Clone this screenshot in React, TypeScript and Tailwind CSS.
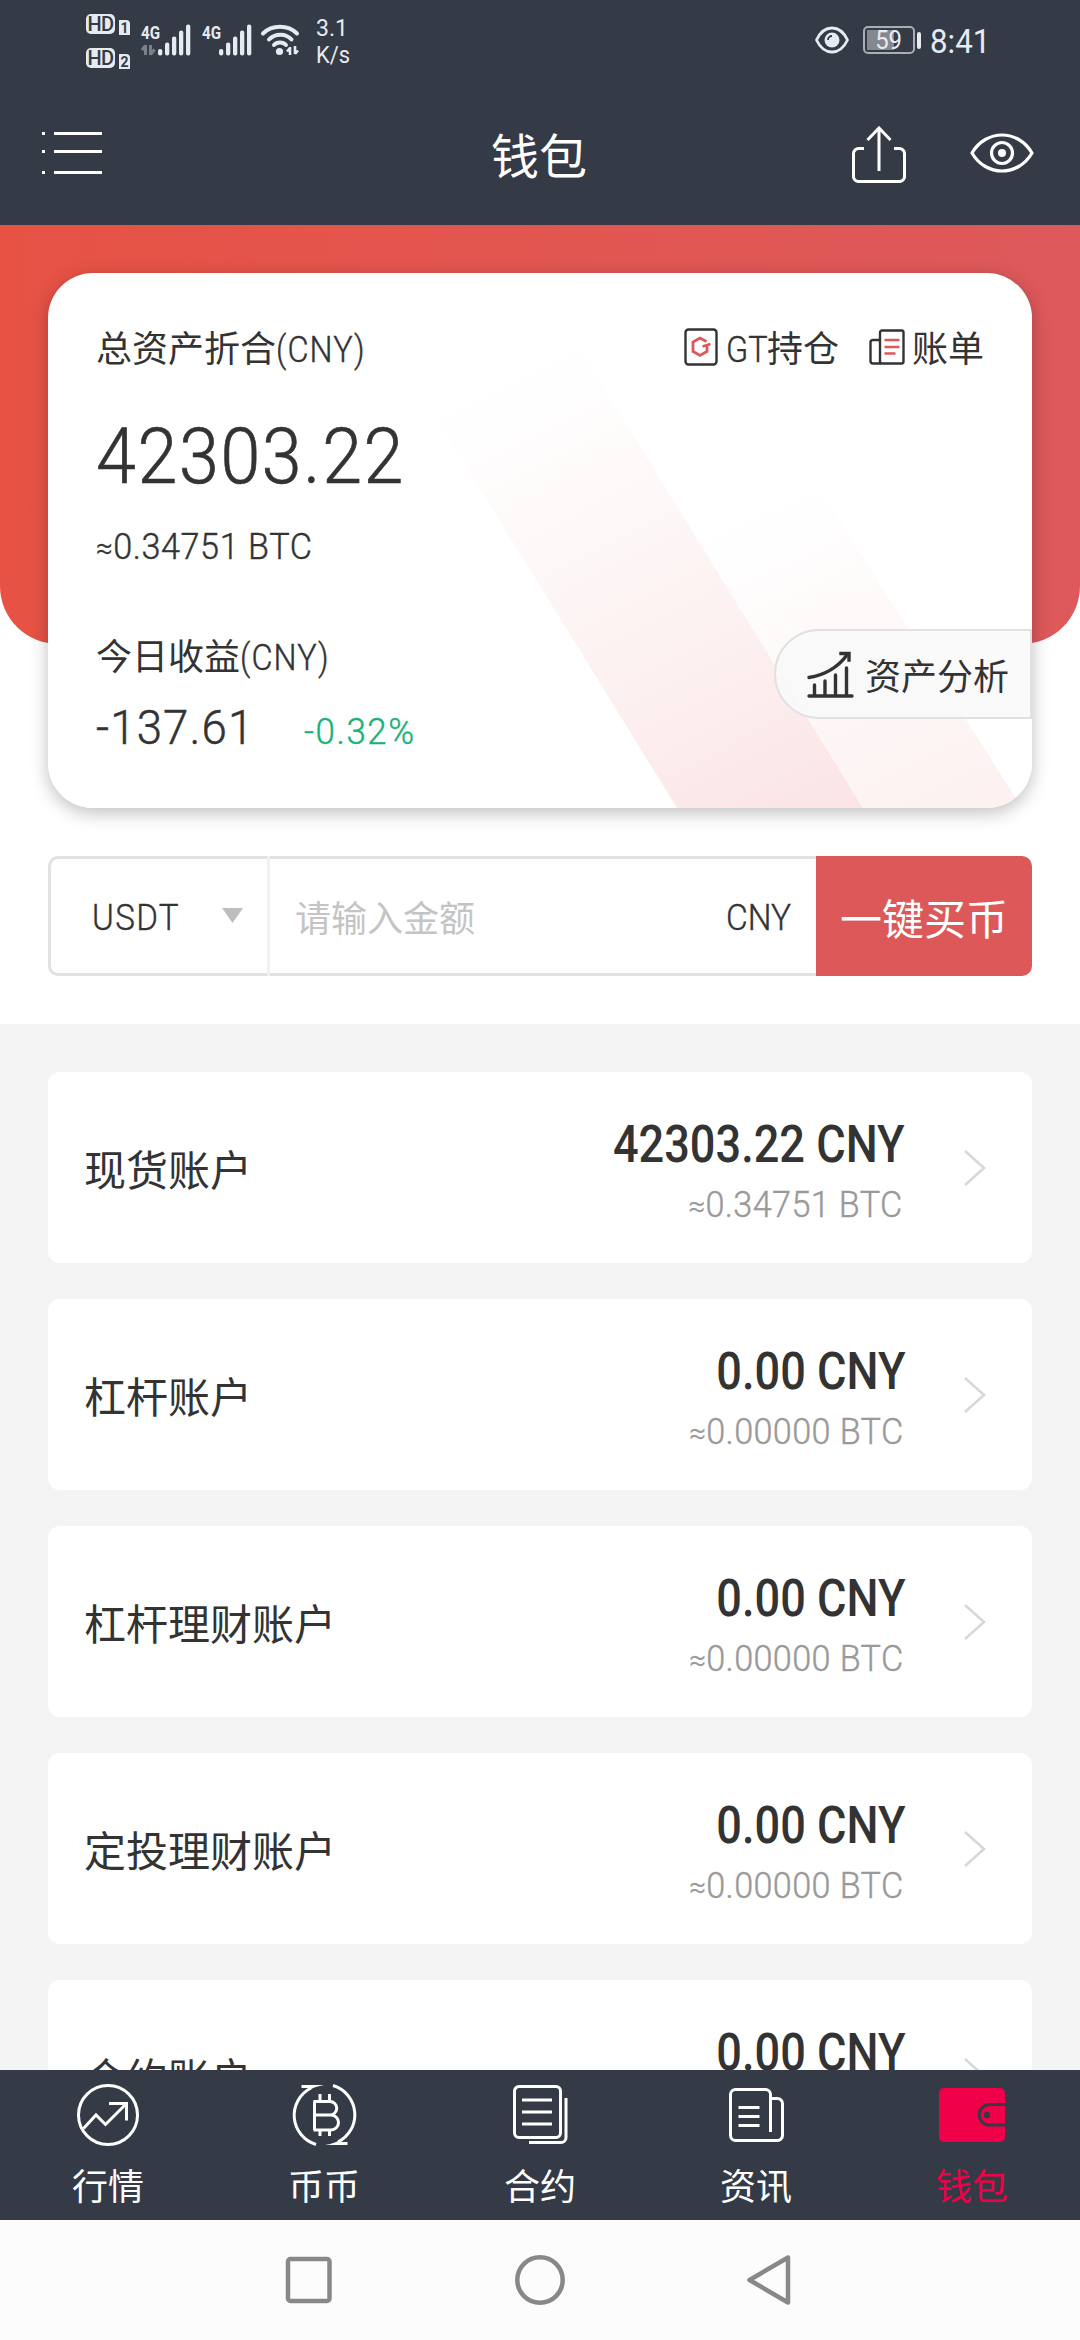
import type { ReactNode } from 'react';

interface Account {
  name: string;
  amount: string;
  btc: string;
}

interface Tab {
  label: string;
  icon: ReactNode;
  active?: boolean;
}

const accounts: Account[] = [
  { name: '现货账户', amount: '42303.22', btc: '0.34751' },
  { name: '杠杆账户', amount: '0.00', btc: '0.00000' },
  { name: '杠杆理财账户', amount: '0.00', btc: '0.00000' },
  { name: '定投理财账户', amount: '0.00', btc: '0.00000' },
  { name: '合约账户', amount: '0.00', btc: '0.00000' },
];

function HdBadge({ sim }: { sim: string }) {
  return (
    <div className="flex h-[21px] gap-1">
      <span className="flex h-[20px] w-[29px] items-center justify-center rounded-[5px] bg-[#e6eaf1] text-[20px] leading-none font-medium tracking-tight text-[#343a46]">
        HD
      </span>
      <span className="mt-[6px] flex h-[15px] w-[11px] items-center justify-center rounded-tr-[4px] bg-[#e6eaf1] text-[14px] leading-none font-bold text-[#343a46]">
        {sim}
      </span>
    </div>
  );
}

function Signal({ arrows }: { arrows?: boolean }) {
  return (
    <div className="relative h-[32px] w-[52px]">
      <span className="absolute -top-px left-0 origin-left scale-x-80 text-[19px] leading-none font-bold text-[#e6eaf1]">4G</span>
      <svg className="absolute inset-0" width="52" height="32" viewBox="0 0 52 32" fill="#e6eaf1">
        {arrows && <path d="M4.500 21v10M4.500 21.500L1 26M9.500 21v10M9.500 30.500l4-5" stroke="#7b808a" strokeWidth="3" fill="none" />}
        <rect x="17" y="25" width="4.300" height="6.500" rx="2" />
        <rect x="24" y="18.500" width="4.300" height="13" rx="2" />
        <rect x="31" y="12.500" width="4.300" height="19" rx="2" />
        <rect x="38" y="6.500" width="4.300" height="25" rx="2" />
        <rect x="45" y="0.500" width="4.300" height="31" rx="2" />
      </svg>
    </div>
  );
}

function StatusBar() {
  return (
    <div className="flex h-[84px] pr-[89px] pl-[86px] text-[#e6eaf1]">
      <div className="flex flex-col gap-[13px] pt-[14px]">
        <HdBadge sim="1" />
        <HdBadge sim="2" />
      </div>
      <div className="mt-6 ml-[11px] flex">
        <Signal arrows />
        <div className="ml-[9px]">
          <Signal />
        </div>
        <svg className="ml-[6px]" width="40" height="32" viewBox="0 0 40 32" fill="none" stroke="#e6eaf1" strokeWidth="4" strokeLinecap="round">
          <path d="M3 9.500C12 0.500 28 0.500 37 9.500" />
          <path d="M9 15.500C15 9 26 9 31.500 15.500" />
          <path d="M14 21C17 17.500 23 17.500 26 21" />
          <circle cx="19.500" cy="27.500" r="3.600" fill="#e6eaf1" stroke="none" />
          <path d="M30 23v8M30 24l-3 3.500M35 22v8M35 30l3-3.500" strokeWidth="2.600" strokeLinecap="butt" />
        </svg>
      </div>
      <div className="mt-[15px] ml-[16px] text-[23px] leading-[27px]">
        <p>3.1</p>
        <p className="origin-left scale-x-95">K/s</p>
      </div>
      <div className="mt-[26px] ml-auto flex h-[28px] items-center">
        <svg width="34" height="28" viewBox="0 0 34 28" fill="none" stroke="#e6eaf1" strokeWidth="2.800">
          <path d="M1.500 14C9-2 25-2 32.500 14C25 30 9 30 1.500 14Z" strokeLinejoin="round" />
          <circle cx="17" cy="14" r="7.500" fill="#e6eaf1" stroke="none" />
          <path d="M13 14a4 4 0 0 1 4-4" stroke="#343a46" strokeWidth="1.800" />
        </svg>
        <div className="relative ml-[14px] flex h-[28px] w-[52px] items-center justify-center rounded-[5px] border-2 border-[#a9adb5]">
          <span className="absolute top-[2px] left-[2px] h-[20px] w-[27px] bg-[#85898f]" />
          <span className="relative scale-x-92 text-[26px] leading-none">59</span>
        </div>
        <span className="ml-[2px] h-[17px] w-[4px] rounded-sm bg-[#e6eaf1]" />
        <span className="mt-px ml-[9px] w-[61px] origin-left scale-x-92 text-[34px] leading-[28px]">8:41</span>
      </div>
    </div>
  );
}

function TitleBar() {
  return (
    <div className="flex h-[141px] items-start justify-between pr-[46px] pl-[42px]">
      <svg className="mt-[48px]" width="60" height="42" viewBox="0 0 60 42" fill="#fff">
        <path d="M0 0h3v3H0zM12 0h48v3H12zM0 18h3v3H0zM12 18h48v3H12zM0 39h3v3H0zM12 39h48v3H12z" />
      </svg>
      <h1 className="mt-[48px] ml-[124px] text-[48px] leading-[52px] text-white">钱包</h1>
      <div className="flex gap-[64px] text-white">
        <svg className="mt-[42px]" width="54" height="57" viewBox="0 0 54 57" fill="none" stroke="currentColor" strokeWidth="3">
          <path d="M12 22.500H7a5 5 0 0 0-5.500 5V50a5 5 0 0 0 5.500 5.500H47a5 5 0 0 0 5.500-5.500V27.500a5 5 0 0 0-5.500-5H42" />
          <path d="M27 45V2M15.500 14L27 2l11.500 12" />
        </svg>
        <svg className="mt-[49px]" width="64" height="40" viewBox="0 0 64 40" fill="none" stroke="currentColor" strokeWidth="3.200">
          <path d="M2 20C16-4 48-4 62 20C48 44 16 44 2 20Z" strokeLinejoin="round" />
          <circle cx="32" cy="20" r="10.500" />
          <circle cx="32" cy="20" r="4" fill="currentColor" stroke="none" />
        </svg>
      </div>
    </div>
  );
}

function AssetCard() {
  return (
    <div className="relative h-[535px] overflow-hidden rounded-[45px] bg-white px-[48px] pt-[56px]">
      <svg className="absolute inset-0" width="984" height="535" viewBox="0 0 984 535">
        <defs>
          <linearGradient id="wide" gradientUnits="userSpaceOnUse" x1="480" y1="90" x2="720" y2="560">
            <stop offset="0" stopColor="#fdf0f0" stopOpacity="0" />
            <stop offset="0.500" stopColor="#fcecec" stopOpacity="0.600" />
            <stop offset="1" stopColor="#fbe5e6" />
          </linearGradient>
          <linearGradient id="pale" gradientUnits="userSpaceOnUse" x1="740" y1="220" x2="900" y2="560">
            <stop offset="0" stopColor="#fdf0f0" stopOpacity="0" />
            <stop offset="1" stopColor="#fdf1f1" />
          </linearGradient>
        </defs>
        <path d="M299 0H485L815 535H629Z" fill="url(#wide)" />
        <path d="M578 150H730L974 535H815Z" fill="url(#pale)" />
      </svg>

      <div className="relative text-[36px] leading-[36px] text-[#333]">
        <div className="flex h-[42px] items-center">
          <span className="whitespace-nowrap">总资产折合</span>
          <span className="origin-left scale-x-90 font-light tracking-[1.200px] [-webkit-text-stroke:0.4px]">(CNY)</span>
          <div className="ml-auto flex items-center">
            <svg className="-mt-[6px] mr-[8px]" width="34" height="38" viewBox="0 0 34 38" fill="none">
              <rect x="1.500" y="1.500" width="31" height="35" rx="3" stroke="#333" strokeWidth="2.400" />
              <path d="M22.500 13.500L16 10L9 14V23.500L16 27.500L23 23.500V17.500M18.500 18.500L26.500 16" stroke="#dd5858" strokeWidth="2.800" />
            </svg>
            <span className="-mr-[5px] origin-left scale-x-90 font-light [-webkit-text-stroke:0.4px]">GT</span>
            <span>持仓</span>
            <svg className="-mt-[6px] mr-[7px] ml-[30px]" width="36" height="36" viewBox="0 0 36 36" fill="none" strokeWidth="2.400">
              <rect x="11" y="1.500" width="23.500" height="33" rx="2" stroke="#333" />
              <path d="M11 11H4a2.500 2.500 0 0 0-2.500 2.500V32A2.500 2.500 0 0 0 4 34.500H12" stroke="#333" />
              <path d="M15.500 11H30.500M15.500 18H30.500M15.500 24.500H26.500" stroke="#dd5858" />
            </svg>
            <span>账单</span>
          </div>
        </div>
        <p className="mt-[47px] origin-left scale-x-92 text-[78px] leading-[78px] font-light tracking-[1.800px] [-webkit-text-stroke:0.7px]">42303.22</p>
        <p className="mt-[33px] origin-left scale-x-95 font-light tracking-[0.600px] [-webkit-text-stroke:0.4px]">
          <span className="text-[31px]">≈</span>0.34751 BTC
        </p>
        <p className="mt-[73px] flex">
          今日收益<span className="origin-left scale-x-90 font-light tracking-[1.200px] [-webkit-text-stroke:0.4px]">(CNY)</span>
        </p>
        <div className="mt-[28px] flex items-baseline font-light">
          <span className="w-[208px] origin-left scale-x-95 text-[48px] leading-[48px] tracking-[1.200px] [-webkit-text-stroke:0.5px]">-137.61</span>
          <span className="origin-left scale-x-97 tracking-[1.600px] text-[#19b276] [-webkit-text-stroke:0.4px]">-0.32%</span>
        </div>
      </div>

      <button className="absolute top-[356px] right-0 flex h-[90px] w-[258px] items-center rounded-l-full border-2 border-[#e1e1e3] bg-[#f9f9fa]/85 pl-[31px] text-[36px] leading-[36px] text-[#333]">
        <svg width="47" height="47" viewBox="0 0 47 47" fill="none" stroke="#333" strokeWidth="3.400" strokeLinecap="round">
          <path d="M2 26.500C18 24 31 16 40 4" />
          <path d="M34 2.500H42V9" strokeLinecap="square" />
          <path d="M2 45H45M7.500 44V34M18 44V30M28.500 44V24M39.500 44V17" />
        </svg>
        <span className="mt-[7px] ml-[11px] whitespace-nowrap">资产分析</span>
      </button>
    </div>
  );
}

function QuickBuy() {
  return (
    <div className="mt-12 flex h-[120px] text-[36px] text-[#333]">
      <div className="flex w-[219px] items-center justify-between rounded-l-[10px] border-y-3 border-l-3 border-[#e2e2e2] pr-[24px] pl-[41px]">
        <span className="mt-1 origin-left scale-x-92 font-light tracking-[1.500px] [-webkit-text-stroke:0.4px]">USDT</span>
        <svg width="21" height="15" viewBox="0 0 21 15" className="-mt-[2px]">
          <path d="M0 0H21L10.500 15Z" fill="#bdbdbd" />
        </svg>
      </div>
      <span className="w-[3px] bg-[#f1f1f1]" />
      <div className="flex flex-1 items-center justify-between border-y-3 border-[#e2e2e2] px-[25px]">
        <span className="mt-2 text-[#c4c4c4]">请输入金额</span>
        <span className="mt-1 origin-right scale-x-93 font-light [-webkit-text-stroke:0.4px]">CNY</span>
      </div>
      <button className="w-[216px] rounded-r-[10px] bg-[#dd5858] pt-[10px] text-[42px] leading-none whitespace-nowrap text-white">
        一键买币
      </button>
    </div>
  );
}

function AccountRow({ name, amount, btc }: Account) {
  return (
    <div className="flex h-[191px] shrink-0 items-start rounded-[12px] bg-white pr-[46px] pl-[36px]">
      <span className="mt-[79px] text-[42px] leading-[42px] text-[#333]">{name}</span>
      <div className="mt-[47px] ml-auto text-right">
        <p className="-mr-[3px] origin-right scale-x-[0.885] text-[51px] leading-[51px] font-medium text-[#333]">{amount} CNY</p>
        <p className="mt-[17px] -mr-px origin-right scale-x-95 text-[36px] leading-[36px] font-light tracking-[0.400px] text-[#999] [-webkit-text-stroke:0.4px]">
          <span className="text-[31px]">≈</span>
          {btc} BTC
        </p>
      </div>
      <svg className="mt-[77px] ml-[61px]" width="23" height="38" viewBox="0 0 23 38" fill="none" stroke="#d8d8d8" strokeWidth="2.600">
        <path d="M2 2L21 19L2 36" />
      </svg>
    </div>
  );
}

const tabs: Tab[] = [
  {
    label: '行情',
    icon: (
      <>
        <ellipse cx="33" cy="33" rx="29.500" ry="29.500" />
        <path d="M8.500 46.500L21 33L30.500 42.500L51 22M34 21.500H51.500V38.500" />
      </>
    ),
  },
  {
    label: '币币',
    icon: (
      <>
        <path d="M25 62.500A30.500 30.500 0 0 1 20 6M10.500 4.500H22" />
        <path d="M42 3.500A30.500 30.500 0 0 1 47 60M56.500 61.500H45" />
        <path d="M18 3H33Q24 4.500 18 8ZM49 63H34Q43 61.500 49 58Z" fill="currentColor" stroke="none" />
        <path d="M22.500 19.500H39a6.700 6.700 0 0 1 0 13.500H22.500M39 33h1a7.500 7.500 0 0 1 0 15H22.500M23.500 19.500V48M29 12V19.500M38.500 12V19.500M29 48V54M38.500 48V54" />
      </>
    ),
  },
  {
    label: '合约',
    icon: (
      <>
        <rect x="7.500" y="4.500" width="46" height="51" rx="4.500" />
        <path d="M15 18H45M15 30H45M15 42H45" />
        <path d="M22 60.500H54a5 5 0 0 0 5-5V16" />
      </>
    ),
  },
  {
    label: '资讯',
    icon: (
      <>
        <path d="M47.500 50V12.500a5 5 0 0 0-5-5H12.500a5 5 0 0 0-5 5V53.500a5 5 0 0 0 5 5H54.500a5 5 0 0 0 5-5V21.500a5 5 0 0 0-5-5H47.500" />
        <path d="M15.500 25.500H36.500M15.500 34.500H36.500M15.500 43.500H36.500" />
      </>
    ),
  },
  {
    label: '钱包',
    active: true,
    icon: (
      <>
        <rect x="0" y="6" width="66" height="54" rx="5" fill="currentColor" stroke="none" />
        <path d="M67 22.500H50.500a10.300 10.300 0 0 0 0 20.600H67" stroke="#343a46" />
        <circle cx="48" cy="33" r="3.200" fill="#343a46" stroke="none" />
      </>
    ),
  },
];

function TabBar() {
  return (
    <nav className="flex h-[150px] shrink-0 bg-[#343a46]">
      {tabs.map((tab) => (
        <div key={tab.label} className={`flex flex-1 flex-col items-center pt-[12px] ${tab.active ? 'text-[#f00048]' : 'text-white'}`}>
          <svg width="66" height="66" viewBox="0 0 66 66" fill="none" stroke="currentColor" strokeWidth="3">
            {tab.icon}
          </svg>
          <span className="mt-[22px] text-[36px] leading-[36px]">{tab.label}</span>
        </div>
      ))}
    </nav>
  );
}

function SystemNav() {
  return (
    <div className="flex h-[120px] shrink-0 items-center justify-center gap-[182px] bg-[#fcfcfc]">
      <svg width="48" height="50" viewBox="0 0 48 50" fill="none" stroke="#888" strokeWidth="4.500">
        <rect x="3" y="4" width="41.500" height="42" rx="2.500" />
      </svg>
      <svg width="50" height="50" viewBox="0 0 50 50" fill="none" stroke="#888" strokeWidth="4.500">
        <circle cx="25" cy="25" r="22.700" />
      </svg>
      <svg width="48" height="50" viewBox="0 0 48 50" fill="none" stroke="#888" strokeWidth="4.500">
        <path d="M41 2.500V47.500L2.500 25Z" strokeLinejoin="round" />
      </svg>
    </div>
  );
}

export default function App() {
  return (
    <div className="flex h-[2340px] w-[1080px] flex-col overflow-hidden bg-[#f4f4f4] font-['Roboto','Noto_Sans_CJK_SC',sans-serif]">
      <header className="h-[225px] shrink-0 bg-[#343a46]">
        <StatusBar />
        <TitleBar />
      </header>

      <section className="relative h-[799px] shrink-0 bg-white px-12 pt-12">
        <div className="absolute inset-x-0 top-0 h-[419px] rounded-b-[58px] bg-linear-to-r from-[#e75244] to-[#dd595b]" />
        <div className="relative rounded-[45px] shadow-[0_5px_18px_rgba(0,0,0,0.25)]">
          <AssetCard />
        </div>
        <QuickBuy />
      </section>

      <main className="flex min-h-0 flex-1 flex-col gap-9 overflow-hidden px-12 pt-12">
        {accounts.map((account) => (
          <AccountRow key={account.name} {...account} />
        ))}
      </main>

      <TabBar />
      <SystemNav />
    </div>
  );
}
